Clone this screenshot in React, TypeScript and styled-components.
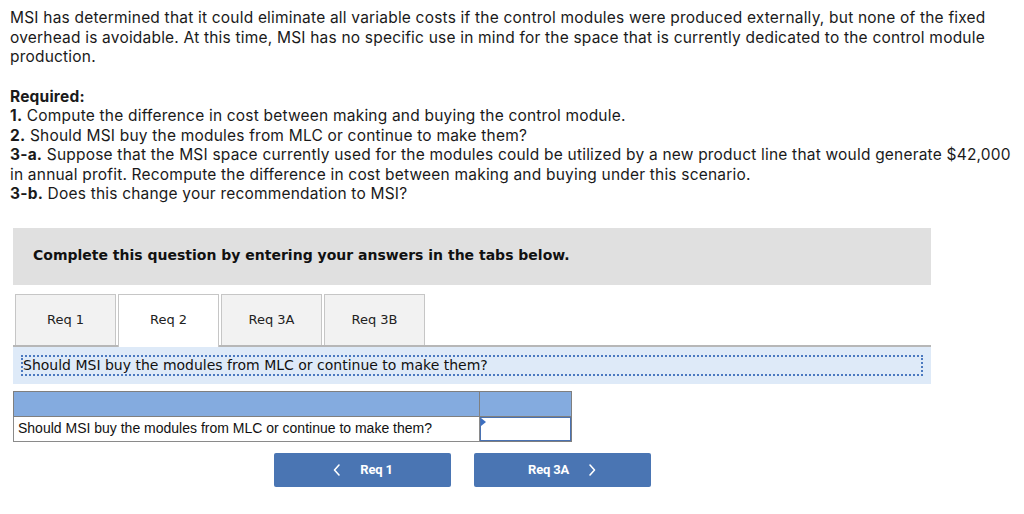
import React from 'react';
import styled, { createGlobalStyle } from 'styled-components';

const GlobalStyle = createGlobalStyle`
  body {
    margin: 0;
    background: #ffffff;
    color: #1a1a1a;
  }
`;

const tabs = ['Req 1', 'Req 2', 'Req 3A', 'Req 3B'];

const App = (): JSX.Element => {
  const activeTab = 1;

  return (
    <Page>
      <GlobalStyle />
      <Intro>
        <Line>MSI has determined that it could eliminate all variable costs if the control modules were produced externally, but none of the fixed</Line>
        <Line>overhead is avoidable. At this time, MSI has no specific use in mind for the space that is currently dedicated to the control module</Line>
        <Line>production.</Line>
      </Intro>
      <Required>
        <strong>Required:</strong>
        <Line>
          <strong>1.</strong> Compute the difference in cost between making and buying the control module.
        </Line>
        <Line>
          <strong>2.</strong> Should MSI buy the modules from MLC or continue to make them?
        </Line>
        <Line>
          <strong>3-a.</strong> Suppose that the MSI space currently used for the modules could be utilized by a new product line that would generate $42,000
        </Line>
        <Line>in annual profit. Recompute the difference in cost between making and buying under this scenario.</Line>
        <Line>
          <strong>3-b.</strong> Does this change your recommendation to MSI?
        </Line>
      </Required>

      <Question>
        <Instruction>Complete this question by entering your answers in the tabs below.</Instruction>

        <TabRow>
          {tabs.map((tab, i) => (
            <Tab key={tab} active={i === activeTab}>
              {tab}
            </Tab>
          ))}
        </TabRow>

        <Panel>
          <PanelTitle>Should MSI buy the modules from MLC or continue to make them?</PanelTitle>
        </Panel>

        <AnswerTable>
          <tbody>
            <tr>
              <HeadCell className="label-col" />
              <HeadCell className="value-col" />
            </tr>
            <tr>
              <LabelCell>Should MSI buy the modules from MLC or continue to make them?</LabelCell>
              <InputCell>
                <DropMarker />
              </InputCell>
            </tr>
          </tbody>
        </AnswerTable>

        <NavRow>
          <NavButton>
            <Chevron viewBox="0 0 10 14">
              <path d="M7 2 L2.5 7 L7 12" />
            </Chevron>
            Req 1
          </NavButton>
          <NavButton>
            Req 3A
            <Chevron viewBox="0 0 10 14">
              <path d="M3 2 L7.5 7 L3 12" />
            </Chevron>
          </NavButton>
        </NavRow>
      </Question>
    </Page>
  );
};

const Page = styled.div`
  padding: 8px 10px 0 10px;
  font-family: 'Inter', 'Open Sans', sans-serif;
  font-size: 15.5px;
  letter-spacing: 0.2px;
  line-height: 19.5px;
`;

const Line = styled.div`
  white-space: nowrap;
`;

const Intro = styled.div`
  margin: 0 0 20px 0;
`;

const Required = styled.div`
  strong {
    font-weight: 700;
  }
`;

const Question = styled.div`
  margin: 24px 0 0 3px;
  width: 918px;
  font-family: 'DejaVu Sans', Verdana, sans-serif;
  letter-spacing: 0;
`;

const Instruction = styled.div`
  background: #e0e0e0;
  height: 57px;
  padding: 0 20px;
  display: flex;
  align-items: center;
  font-size: 14px;
  font-weight: 700;
  color: #111;
`;

const TabRow = styled.div`
  display: flex;
  gap: 2px;
  margin-top: 9px;
  padding-left: 2px;
  position: relative;
  z-index: 1;
`;

const Tab = styled.div<{ active: boolean }>`
  width: 101px;
  box-sizing: border-box;
  display: flex;
  align-items: center;
  justify-content: center;
  font-size: 13px;
  color: #222;
  border: 1px solid #c6c6c6;
  border-bottom: none;
  background: ${(p) => (p.active ? '#ffffff' : '#f2f2f2')};
  height: ${(p) => (p.active ? '53px' : '51px')};
  padding-bottom: ${(p) => (p.active ? '2px' : '0')};
  margin-bottom: ${(p) => (p.active ? '-2px' : '0')};
`;

const Panel = styled.div`
  background: #deeaf8;
  border-top: 2px solid #b7b7b7;
  height: 28px;
  padding: 9px 9px 0 9px;
`;

const PanelTitle = styled.div`
  outline: 2px dotted #4b79c0;
  outline-offset: -1px;
  height: 19px;
  line-height: 18px;
  padding-left: 1px;
  font-size: 14px;
  color: #111;
`;

const AnswerTable = styled.table`
  margin-top: 7px;
  border-collapse: collapse;
  width: 559px;
  font-family: 'Liberation Sans', Arial, sans-serif;
`;

const HeadCell = styled.td`
  background: #84abdf;
  border: 1px solid #7f7f7f;
  height: 24px;
  padding: 0;

  &.label-col {
    width: 465px;
  }
`;

const LabelCell = styled.td`
  border: 1px solid #8a8a8a;
  height: 24px;
  padding: 0 0 0 4px;
  font-size: 14px;
  color: #111;
`;

const InputCell = styled.td`
  border: 1px solid #7f7f7f;
  box-shadow: inset 0 0 0 1px #4a72b2;
  padding: 0;
  position: relative;
`;

const DropMarker = styled.span`
  position: absolute;
  left: 1px;
  top: 1px;
  width: 0;
  height: 0;
  border-top: 4px solid transparent;
  border-bottom: 4px solid transparent;
  border-left: 5px solid #3d6fc0;
`;

const NavRow = styled.div`
  display: flex;
  gap: 23px;
  margin-top: 11px;
  padding-left: 261px;
`;

const NavButton = styled.button`
  width: 177px;
  height: 34px;
  border: none;
  border-radius: 2px;
  background: #4a75b3;
  color: #ffffff;
  font-family: 'Roboto', 'Liberation Sans', sans-serif;
  font-weight: 700;
  font-size: 13px;
  letter-spacing: -0.2px;
  display: flex;
  align-items: center;
  justify-content: center;
  gap: 18px;
  cursor: pointer;
`;

const Chevron = styled.svg`
  width: 10px;
  height: 14px;
  fill: none;
  stroke: #ffffff;
  stroke-width: 1.6;
  stroke-linecap: round;
  stroke-linejoin: round;
`;

export default App;
